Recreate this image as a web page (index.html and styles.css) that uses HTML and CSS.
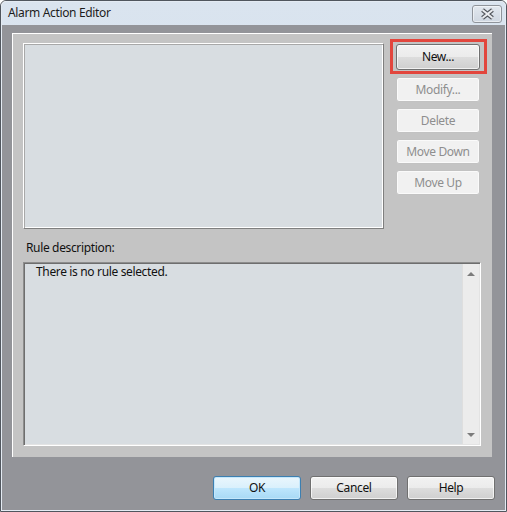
FILE: index.html
```html
<!DOCTYPE html>
<html>
<head>
<meta charset="utf-8">
<title>Alarm Action Editor</title>
<link rel="stylesheet" href="styles.css">
</head>
<body>
<div class="window">
  <div class="frame">
    <div class="titlebar">
      <span class="title">Alarm Action Editor</span>
      <div class="close">
        <svg width="15" height="12" viewBox="0 0 15 12">
          <path d="M2.5 2 L12.5 10 M12.5 2 L2.5 10" stroke="#55595f" stroke-width="4.2" fill="none"/>
          <path d="M2.5 2 L12.5 10 M12.5 2 L2.5 10" stroke="#eceef1" stroke-width="2" fill="none"/>
        </svg>
      </div>
    </div>
    <div class="client">
      <div class="panel">
        <div class="red-mark"></div>
        <div class="top-row">
          <div class="listbox"></div>
          <div class="side-buttons">
            <button class="btn new">New...</button>
            <button class="btn" disabled>Modify...</button>
            <button class="btn" disabled>Delete</button>
            <button class="btn" disabled>Move Down</button>
            <button class="btn" disabled>Move Up</button>
          </div>
        </div>
        <div class="label">Rule description:</div>
        <div class="desc">
          <div class="desc-text">There is no rule selected.</div>
          <div class="scrollbar">
            <span class="arrow up"></span>
            <span class="arrow down"></span>
          </div>
        </div>
      </div>
      <div class="bottom-row">
        <button class="btn wide ok">OK</button>
        <button class="btn wide">Cancel</button>
        <button class="btn wide">Help</button>
      </div>
    </div>
  </div>
</div>
</body>
</html>
```
FILE: styles.css
```css
html, body {
  margin: 0;
  padding: 0;
  background: #ffffff;
}

body {
  font-family: "Noto Sans", "Open Sans", sans-serif;
  font-size: 12px;
  letter-spacing: -0.35px;
  color: #111;
}

.window {
  width: 507px;
  height: 512px;
  box-sizing: border-box;
  border: 1px solid #50565e;
  border-radius: 6px 6px 0 0;
  overflow: hidden;
}

.frame {
  height: 100%;
  box-sizing: border-box;
  border: 1px solid #e4ebf3;
  border-radius: 5px 5px 0 0;
  display: flex;
  flex-direction: column;
  background: linear-gradient(#dae4ef, #c9d7e6);
}

.titlebar {
  height: 23px;
  display: flex;
  align-items: center;
  padding-left: 6px;
  flex: none;
}

.title {
  line-height: 16px;
  color: #1c1c1c;
  padding-bottom: 1px;
}

.close {
  margin-left: auto;
  margin-right: 3px;
  align-self: flex-start;
  margin-top: 3px;
  width: 30px;
  height: 18px;
  box-sizing: border-box;
  border: 1px solid #8f949b;
  border-radius: 3px;
  background: linear-gradient(#e2e8ef, #cfd7e1);
  box-shadow: inset 0 0 0 1px rgba(255,255,255,0.5);
  display: flex;
  align-items: center;
  justify-content: center;
}

.client {
  flex: 1;
  background: #939499;
  display: flex;
  flex-direction: column;
  padding-top: 8px;
}

.panel {
  position: relative;
  margin: 0 13px 0 10px;
  width: 480px;
  height: 424px;
  box-sizing: border-box;
  background: #c4c4c4;
  border-top: 1px solid #ffffff;
  border-left: 1px solid #ffffff;
  padding: 9px 0 0 10px;
}

.red-mark {
  position: absolute;
  left: 377px;
  top: 5px;
  width: 97px;
  height: 35px;
  box-sizing: border-box;
  border: 3px solid #e2463d;
}

.top-row {
  display: flex;
  gap: 12px;
}

.listbox {
  width: 361px;
  height: 186px;
  box-sizing: border-box;
  background: #d8dde1;
  border: 1px solid;
  border-color: #ffffff #7f7f7f #7f7f7f #ffffff;
  box-shadow: inset 1px 1px 0 #a8a8a8, inset -1px -1px 0 #ffffff;
}

.side-buttons {
  width: 84px;
  display: flex;
  flex-direction: column;
  gap: 6px;
  padding-top: 1px;
}

.btn {
  font-family: "Noto Sans", "Open Sans", sans-serif;
  font-size: 12px;
  letter-spacing: -0.35px;
  color: #111;
  height: 25px;
  padding: 0;
  box-sizing: border-box;
  border: 1px solid #707070;
  border-radius: 3px;
  background: linear-gradient(#f2f2f2 0%, #ebebeb 50%, #dddddd 50%, #cfcfcf 100%);
  box-shadow: inset 0 0 0 1px rgba(255,255,255,0.7);
  line-height: 16px;
}

.btn.new {
  height: 26px;
  margin-bottom: 1px;
}

.btn:disabled {
  border-color: #c2c2c2;
  background: #f1f1f1;
  color: #8e8e8e;
  box-shadow: inset 0 0 0 1px #fafafa;
}

.label {
  margin-top: 11px;
  line-height: 16px;
  padding-left: 3px;
}

.desc {
  margin-top: 6px;
  width: 458px;
  height: 184px;
  box-sizing: border-box;
  background: #d8dde1;
  border: 1px solid;
  border-color: #8d8d8d #ffffff #ffffff #8d8d8d;
  box-shadow: inset 1px 1px 0 #6e6e6e, inset -1px -1px 0 #e3e3e3;
  display: flex;
}

.desc-text {
  flex: 1;
  padding: 1px 0 0 12px;
  line-height: 16px;
}

.scrollbar {
  width: 17px;
  margin: 1px 1px 1px 0;
  box-sizing: border-box;
  background: #ececec;
  border-left: 1px solid #dedede;
  display: flex;
  flex-direction: column;
  justify-content: space-between;
  align-items: center;
  padding: 8px 0 7px;
}

.arrow {
  width: 0;
  height: 0;
  border-left: 4px solid transparent;
  border-right: 4px solid transparent;
}

.arrow.up {
  border-bottom: 4px solid #7c7c7c;
}

.arrow.down {
  border-top: 4px solid #7c7c7c;
}

.bottom-row {
  display: flex;
  justify-content: flex-end;
  gap: 9px;
  padding-right: 10px;
  margin-top: 19px;
}

.btn.wide {
  width: 88px;
  height: 24px;
}

.btn.ok {
  border-color: #3c7fb1;
  background: linear-gradient(#eaf6fd 0%, #d9f0fc 50%, #bee6fd 50%, #a7d9f5 100%);
  box-shadow: inset 0 0 0 1px #c4e7fb;
}
```
